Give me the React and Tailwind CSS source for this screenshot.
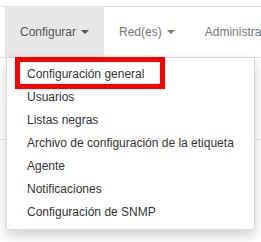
const items = [
	'Configuración general',
	'Usuarios',
	'Listas negras',
	'Archivo de configuración de la etiqueta',
	'Agente',
	'Notificaciones',
	'Configuración de SNMP',
];

const Caret = () => (
	<span className="inline-block ml-[5px] w-0 h-0 align-middle border-t-[4px] border-t-current border-x-[4px] border-x-transparent" />
);

export default function App() {
	return (
		<div
			className="relative w-[261px] h-[242px] bg-white overflow-hidden pt-[6px]"
			style={{ fontFamily: '"Liberation Sans", Arial, sans-serif' }}>
			{/* navbar */}
			<div className="h-[52px] border-y border-[#e3e3e3] flex pl-[5px] text-[12px] whitespace-nowrap">
				<div className="h-full flex items-center px-[15px] bg-[#e7e7e7] text-[#555]">
					Configurar
					<Caret />
				</div>
				<div className="h-full flex items-center px-[15px] text-[#777]">
					Red(es)
					<Caret />
				</div>
				<div className="h-full flex items-center px-[15px] text-[#777]">
					Administración
				</div>
			</div>

			{/* page content behind the menu */}
			<div className="mt-[81px] h-px bg-[#e5e5e5]" />

			{/* dropdown */}
			<div className="absolute top-[57px] left-[6px] bg-white border border-black/15 rounded-b-[3px] py-[5px] shadow-[0_6px_12px_rgba(0,0,0,0.175)]">
				{items.map((label) => (
					<div
						key={label}
						className="px-[20px] py-[3px] text-[12px] leading-[17px] text-[#333] whitespace-nowrap">
						{label}
					</div>
				))}
			</div>

			{/* highlight */}
			<div className="absolute top-[57px] left-[15px] w-[150px] h-[32px] border-[5px] border-[#ff0000]" />
		</div>
	);
}
